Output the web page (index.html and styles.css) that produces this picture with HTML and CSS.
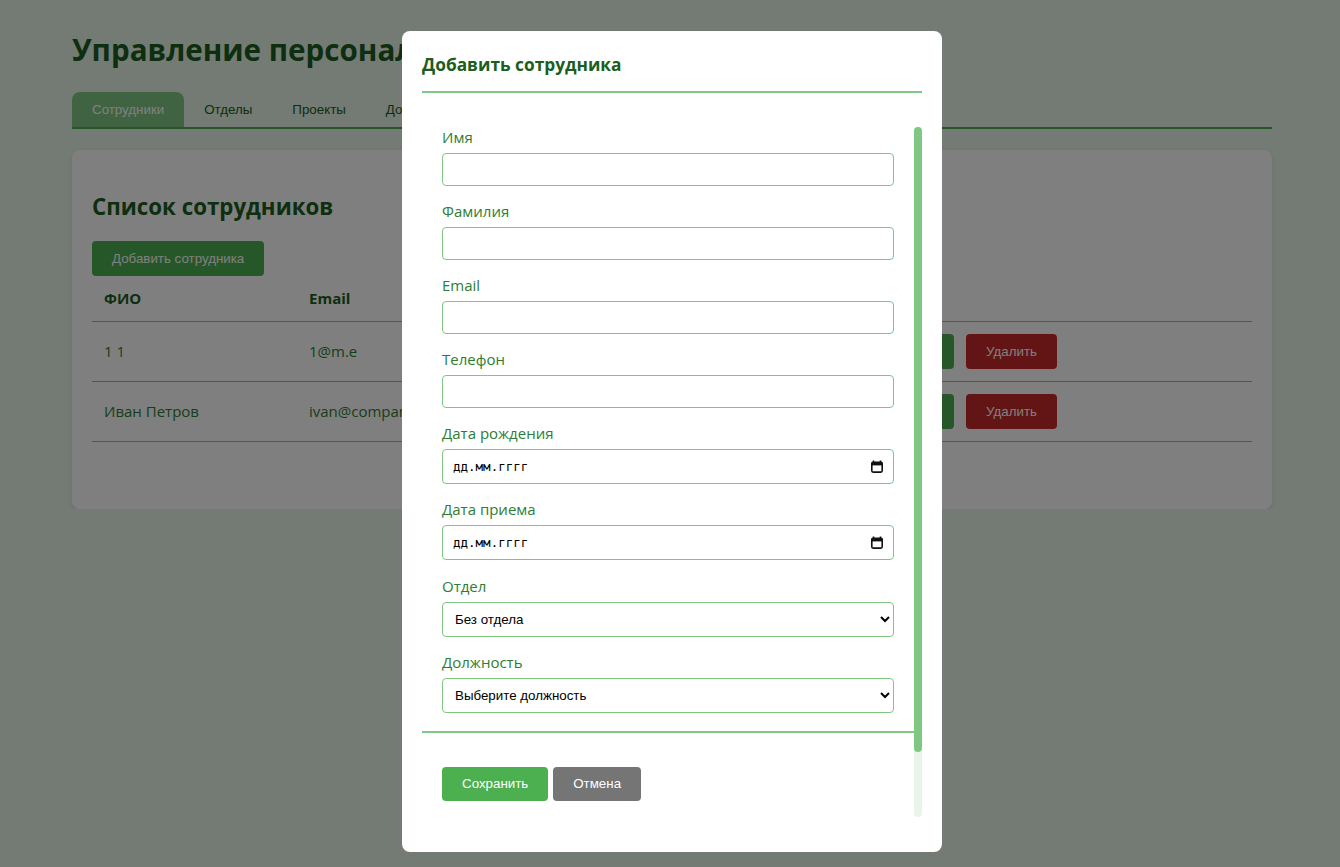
FILE: index.html
```html
<!DOCTYPE html>
<html lang="ru">
<head>
<meta charset="utf-8">
<title>Управление персоналом</title>
<link rel="stylesheet" href="styles.css">
</head>
<body>
<div class="container">
  <h1 class="page-title">Управление персоналом</h1>
  <nav class="tabs">
    <button class="tab active">Сотрудники</button>
    <button class="tab">Отделы</button>
    <button class="tab">Проекты</button>
    <button class="tab">Должности</button>
    <button class="tab">Отчеты</button>
  </nav>
  <section class="card">
    <h2 class="card-title">Список сотрудников</h2>
    <button class="btn btn-green">Добавить сотрудника</button>
    <table class="table">
      <colgroup>
        <col class="c-name"><col class="c-email"><col class="c-phone"><col class="c-dept"><col class="c-pos"><col>
      </colgroup>
      <thead>
        <tr><th>ФИО</th><th>Email</th><th>Телефон</th><th>Отдел</th><th>Должность</th><th>Действия</th></tr>
      </thead>
      <tbody>
        <tr>
          <td>1 1</td><td>1@m.e</td><td>1</td><td>—</td><td>—</td>
          <td><div class="actions"><button class="btn btn-green">Редактировать</button><button class="btn btn-red">Удалить</button></div></td>
        </tr>
        <tr>
          <td>Иван Петров</td><td>ivan@company.ru</td><td>+7 900 000</td><td>IT</td><td>—</td>
          <td><div class="actions"><button class="btn btn-green">Редактировать</button><button class="btn btn-red">Удалить</button></div></td>
        </tr>
      </tbody>
    </table>
  </section>
</div>

<div class="overlay">
  <div class="modal">
    <div class="modal-header">
      <h2 class="modal-title">Добавить сотрудника</h2>
    </div>
    <div class="modal-body">
      <div class="scroll-content">
        <form class="form">
          <div class="group"><label>Имя</label><input type="text" class="field"></div>
          <div class="group"><label>Фамилия</label><input type="text" class="field"></div>
          <div class="group"><label>Email</label><input type="email" class="field"></div>
          <div class="group"><label>Телефон</label><input type="tel" class="field"></div>
          <div class="group"><label>Дата рождения</label>
            <div class="date-wrap"><input type="text" class="field date" placeholder="дд.мм.гггг">
              <svg class="cal" width="12" height="13" viewBox="0 0 12 13"><path d="M2.5 0.5v2M9.5 0.5v2" stroke="#111" stroke-width="1.6"/><rect x="0.8" y="2.2" width="10.4" height="9.9" rx="1.3" fill="none" stroke="#111" stroke-width="1.6"/><rect x="0.8" y="2.2" width="10.4" height="3.2" fill="#111"/></svg>
            </div>
          </div>
          <div class="group"><label>Дата приема</label>
            <div class="date-wrap"><input type="text" class="field date" placeholder="дд.мм.гггг">
              <svg class="cal" width="12" height="13" viewBox="0 0 12 13"><path d="M2.5 0.5v2M9.5 0.5v2" stroke="#111" stroke-width="1.6"/><rect x="0.8" y="2.2" width="10.4" height="9.9" rx="1.3" fill="none" stroke="#111" stroke-width="1.6"/><rect x="0.8" y="2.2" width="10.4" height="3.2" fill="#111"/></svg>
            </div>
          </div>
          <div class="group sel-first"><label>Отдел</label>
            <select class="field select"><option>Без отдела</option><option>IT</option></select>
          </div>
          <div class="group"><label>Должность</label>
            <select class="field select"><option>Выберите должность</option></select>
          </div>
        </form>
        <div class="modal-footer">
          <button class="btn btn-green">Сохранить</button>
          <button class="btn btn-gray">Отмена</button>
        </div>
      </div>
      <div class="scrollbar"><div class="thumb"></div></div>
    </div>
  </div>
</div>
</body>
</html>
```

FILE: styles.css
```css
* { box-sizing: border-box; }

body {
  margin: 0;
  padding: 31px 0 0 4px;
  background: #e8f5e9;
  font-family: "Open Sans", "Noto Sans", sans-serif;
  color: #2e7d32;
}

.container {
  max-width: 1200px;
  margin: 0 auto;
}

.page-title {
  margin: 0 0 23px;
  font-size: 29.6px;
  line-height: 38px;
  font-weight: 700;
  color: #1b5e20;
}

.tabs {
  display: flex;
  border-bottom: 2px solid #4caf50;
  margin-bottom: 21px;
}

.tab {
  border: 0;
  background: transparent;
  padding: 10px 20px;
  font-family: "Liberation Sans", Arial, sans-serif;
  font-size: 13.33px;
  line-height: 15px;
  color: #1b5e20;
  border-radius: 8px 8px 0 0;
}

.tab.active {
  background: #81c784;
  color: #ffffff;
}

.card {
  background: #ffffff;
  border-radius: 8px;
  padding: 20px;
  box-shadow: 0 2px 4px rgba(0, 0, 0, 0.1);
}

.card-title {
  margin: 21px 0 18px;
  font-size: 22.3px;
  line-height: 32px;
  color: #1b5e20;
}

.btn {
  display: inline-block;
  border: 0;
  border-radius: 4px;
  padding: 10px 20px;
  font-family: "Liberation Sans", Arial, sans-serif;
  font-size: 13.33px;
  line-height: 15px;
  color: #ffffff;
  cursor: pointer;
}

.card > .btn { display: block; }

.btn-green { background: #4caf50; }
.btn-red { background: #c62828; }
.btn-gray { background: #757575; }

.table {
  width: 100%;
  border-collapse: collapse;
  table-layout: fixed;
  margin-bottom: 47px;
}

.c-name { width: 205px; }
.c-email { width: 200px; }
.c-phone { width: 110px; }
.c-dept { width: 100px; }
.c-pos { width: 103px; }

.table th,
.table td {
  padding: 12px;
  text-align: left;
  font-size: 15px;
  line-height: 21px;
  border-bottom: 1px solid #81c784;
  vertical-align: middle;
  white-space: nowrap;
  overflow: hidden;
}

.table th { font-weight: 700; color: #1b5e20; }
.table td { color: #2e7d32; }

.actions { display: flex; gap: 12px; }

/* modal */
.overlay {
  position: fixed;
  inset: 0;
  background: rgba(0, 0, 0, 0.5);
  display: flex;
  justify-content: center;
  align-items: flex-start;
  padding: 31px 0 0 4px;
}

.modal {
  width: 540px;
  background: #ffffff;
  border-radius: 8px;
  padding: 20px 20px 35px;
}

.modal-header {
  padding: 1px 0 13px;
  border-bottom: 2px solid #81c784;
  margin-bottom: 34px;
}

.modal-title {
  margin: 0;
  font-size: 17.3px;
  line-height: 26px;
  font-weight: 700;
  color: #1b5e20;
}

.modal-body {
  height: 690px;
  display: flex;
}

.scroll-content {
  flex: 1;
  min-width: 0;
  overflow: hidden;
}

.scrollbar {
  width: 8px;
  flex: none;
  background: #e8f5e9;
  border-radius: 4px;
}

.thumb {
  height: 625px;
  background: #81c784;
  border-radius: 4px;
}

.form { padding: 0 20px 3px; }

.group { margin-bottom: 15px; }

.group label {
  display: block;
  margin-bottom: 5px;
  font-size: 15px;
  line-height: 21px;
  color: #2e7d32;
}

.group.sel-first { padding-top: 1px; }

.field {
  display: block;
  width: 100%;
  padding: 8px;
  border: 1px solid #81c784;
  border-radius: 4px;
  background: #ffffff;
  font-family: "Liberation Sans", Arial, sans-serif;
  font-size: 13.33px;
  line-height: 15px;
  color: #000000;
  outline: none;
}

.date-wrap { position: relative; }

.field.date {
  height: 35px;
  font-family: "DejaVu Sans Mono", "Liberation Mono", monospace;
  font-size: 12.5px;
  padding-left: 10px;
}

.field.date::placeholder { color: #000000; opacity: 1; }

.cal {
  position: absolute;
  right: 11px;
  top: 11px;
}

.field.select {
  height: 35px;
  padding: 8px;
}

.modal-footer {
  border-top: 2px solid #81c784;
  padding: 34px 20px 88px;
  display: flex;
  gap: 5px;
}

.modal-footer .btn { padding: 10px 20px; line-height: 14px; }
```
